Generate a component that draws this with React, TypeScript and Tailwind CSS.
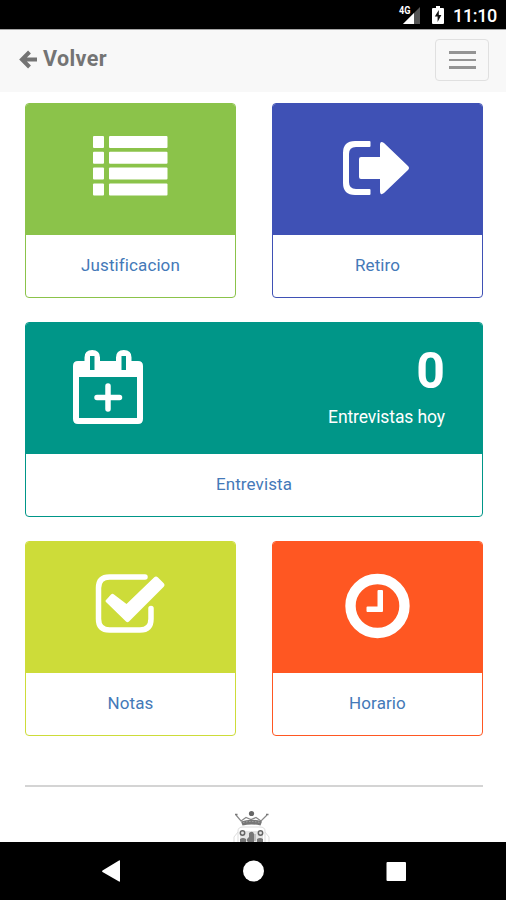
import type { ReactNode } from "react";

type CardProps = {
  label: string;
  frame: string;
  fill: string;
  className?: string;
  children: ReactNode;
};

function Card({ label, frame, fill, className = "", children }: CardProps) {
  return (
    <a className={`flex h-[195px] flex-col overflow-hidden rounded-[4px] border bg-white ${frame} ${className}`}>
      <div className={`h-[131px] shrink-0 ${fill}`}>{children}</div>
      <div className="flex flex-1 items-center justify-center text-[17px] tracking-[0.1px] text-[#4479b8]">{label}</div>
    </a>
  );
}

function ListIcon() {
  return (
    <svg className="ml-[66px] mt-[31px]" width="76" height="62" viewBox="0 0 76 62" fill="#fff">
      <rect x="1" y="1" width="11" height="12" rx="1" />
      <rect x="17" y="1" width="58.5" height="12" rx="1" />
      <rect x="1" y="16.8" width="11" height="12" rx="1" />
      <rect x="17" y="16.8" width="58.5" height="12" rx="1" />
      <rect x="1" y="32.6" width="11" height="12" rx="1" />
      <rect x="17" y="32.6" width="58.5" height="12" rx="1" />
      <rect x="1" y="48.4" width="11" height="12" rx="1" />
      <rect x="17" y="48.4" width="58.5" height="12" rx="1" />
    </svg>
  );
}

function ExitIcon() {
  return (
    <svg className="ml-[69px] mt-[36px]" width="68" height="56" viewBox="0 0 68 56" fill="#fff">
      <path d="M27.5 1H13Q1 1 1 13v30Q1 55 13 55h14.500q1 0 1-1v-4q0-1-1-1H14Q7 49 7 42V14Q7 7 14 7h13.500q1 0 1-1V2q0-1-1-1z" />
      <path d="M19 17h19V5q0-5 4-2l24 23q2 2 0 4L42 53q-4 3-4-2V39H19q-2 0-2-2V19q0-2 2-2z" />
    </svg>
  );
}

function CalendarPlusIcon() {
  return (
    <svg width="72" height="78" viewBox="0 0 72 78" fill="#fff">
      <path
        fillRule="evenodd"
        d="M5 13h6.500V9.500Q11.500 2 19.200 2T27 9.500V13h16V9.500Q43 2 50.800 2T58.500 9.500V13H65q5 0 5 5v53q0 5-5 5H5q-5 0-5-5V18q0-5 5-5zM6 29v41h58V29zM17 8v14h4.500V8zM48.500 8v14H53V8z"
      />
      <path d="M35 38v23M24 49.500h22.500" stroke="#fff" strokeWidth="5.500" strokeLinecap="round" />
    </svg>
  );
}

function CheckIcon() {
  return (
    <svg className="ml-[69px] mt-[31px]" width="73" height="62" viewBox="0 0 73 62" fill="none">
      <path d="M50 4H14.500Q3.500 4 3.500 15v31q0 11 11 11H45q11 0 11-11V35.500" stroke="#fff" strokeWidth="5.500" strokeLinecap="round" />
      <path
        d="M11.500 26.500l4.500-5q1.500-1.500 3 0L31.500 31 59 4.500q2-2 4 0l5.500 5.500q2 2 0 4L34 48.500q-1.500 1.500-3 0L11.500 29.500q-2-1.500 0-3z"
        fill="#fff"
      />
    </svg>
  );
}

function ClockIcon() {
  return (
    <svg className="ml-[71px] mt-[31px]" width="66" height="66" viewBox="0 0 66 66" fill="none">
      <circle cx="33.500" cy="33" r="27" stroke="#fff" strokeWidth="10.400" />
      <path d="M34.500 17h3.500q1 0 1 1v20q0 1-1 1H23.500q-1 0-1-1v-3.500q0-1 1-1h10V18q0-1 1-1z" fill="#fff" />
    </svg>
  );
}

function StatusBar() {
  return (
    <div className="flex h-[30px] items-center justify-end border-b border-[#a5a5a5] bg-black pr-[9px] text-white">
      <svg className="mr-[10px]" width="24" height="22" viewBox="0 0 24 22">
        <path d="M22 3v17H5z" fill="#555" />
        <path d="M16 9v11H5z" fill="#fff" />
        <text x="1" y="9.5" fill="#fff" fontFamily="Roboto, sans-serif" fontSize="10" fontWeight="700" textLength="11.500" lengthAdjust="spacingAndGlyphs">4G</text>
      </svg>
      <svg className="mr-[9px]" width="12" height="20" viewBox="0 0 12 20">
        <path d="M1 3h3V1h4v2h3q1 0 1 1v14q0 1-1 1H1q-1 0-1-1V4q0-1 1-1z" fill="#fff" />
        <path d="M6.800 5L2.800 11.500h2.800V17l3.800-7H6.800z" fill="#111" />
      </svg>
      <span className="relative top-[1px] w-[44px] whitespace-nowrap text-[18px] font-medium leading-5 tracking-[-0.35px]">11:10</span>
    </div>
  );
}

function Crest() {
  return (
    <svg className="ml-[207px] mt-[23px] block" width="40" height="33" viewBox="0 0 40 33" fill="none">
      <path d="M4 5l5 6 5-3.500 5 2 5-2 5 3.500 6-6" stroke="#888" strokeWidth="1.200" />
      <circle cx="19.500" cy="3.500" r="2.600" fill="#666" />
      <path d="M3 4.500h2.500M34 4.500h2.500" stroke="#777" strokeWidth="1.500" />
      <path d="M9 11.500q10.500-3.500 21 0l-1.500 4q-9-2-18 0z" fill="#777" />
      <path d="M11 12.500q8.500-2 17 0" stroke="#aaa" strokeDasharray="1.500 1.500" />
      <path d="M6 33V21q0-4 5-4h17q5 0 5 4v12M2 33v-6l4-5m31 11v-6l-4-5" stroke="#ddd" />
      <path d="M8 21h23v12H8z" fill="#e5e5e5" />
      <circle cx="10.500" cy="23" r="2.200" stroke="#666" strokeWidth="1.500" />
      <circle cx="28.500" cy="23" r="2.200" stroke="#666" strokeWidth="1.500" />
      <path d="M8 29q3-2 6 0v3H8zm17 0q3-2 6 0v3h-6z" fill="#777" />
      <path d="M17 23q4-3 5 1v8h-6q-3-2 1-5z" fill="#777" />
      <path d="M23 24v7" stroke="#999" />
    </svg>
  );
}

export default function App() {
  return (
    <div className="flex h-[900px] w-[506px] flex-col overflow-hidden bg-white font-[Roboto,sans-serif]">
      <StatusBar />
      <header className="flex h-[62px] shrink-0 items-start justify-between bg-[#f8f8f8] pl-[19px] pr-[17px]">
        <a className="mt-[15px] flex items-center text-[21.5px] font-bold leading-7 tracking-[0.4px] text-[#747474]">
          <svg className="mr-[5px]" width="19" height="21" viewBox="0 0 19 21" fill="none">
            <path d="M10.500 3L3 10.500l7.500 7.500M3.500 10.500H18" stroke="#747474" strokeWidth="4" />
          </svg>
          <span>Volver</span>
        </a>
        <button className="mt-[9px] flex h-[42px] w-[54px] flex-col items-center justify-center gap-[5px] rounded-[4px] border border-[#e0e0e0]">
          <span className="h-[2.5px] w-[27px] bg-[#949494]" />
          <span className="h-[2.5px] w-[27px] bg-[#949494]" />
          <span className="h-[2.5px] w-[27px] bg-[#949494]" />
        </button>
      </header>
      <main className="min-h-0 flex-1 overflow-hidden pl-[25px] pr-[23px] pt-[11px]">
        <div className="grid grid-cols-2 gap-x-[36px] gap-y-[24px]">
          <Card label="Justificacion" frame="border-[#8bc34a]" fill="bg-[#8bc34a]">
            <ListIcon />
          </Card>
          <Card label="Retiro" frame="border-[#3f51b5]" fill="bg-[#3f51b5]">
            <ExitIcon />
          </Card>
          <Card label="Entrevista" frame="border-[#009688]" fill="bg-[#009688]" className="col-span-2">
            <div className="flex justify-between pl-[47px] pr-[37px] pt-[25px] text-white">
              <CalendarPlusIcon />
              <div className="flex flex-col items-end">
                <span className="text-[50px] font-bold leading-[46px]">0</span>
                <span className="mt-[11px] text-[17.5px] leading-6 tracking-[-0.1px]">Entrevistas hoy</span>
              </div>
            </div>
          </Card>
          <Card label="Notas" frame="border-[#cddc39]" fill="bg-[#cddc39]">
            <CheckIcon />
          </Card>
          <Card label="Horario" frame="border-[#ff5722]" fill="bg-[#ff5722]">
            <ClockIcon />
          </Card>
        </div>
        <hr className="mt-[49px] border-0 border-t-2 border-[#d4d4d4]" />
        <Crest />
      </main>
      <nav className="h-[58px] shrink-0 bg-black">
        <svg width="506" height="58" viewBox="0 0 506 58" fill="#fff">
          <path d="M119 18.500q1-.5 1 .500v20q0 1-1 .500l-16.500-9.500q-1-1 0-1.500z" />
          <circle cx="253.500" cy="29" r="10.500" />
          <rect x="386.500" y="20" width="19.500" height="19" rx="1" />
        </svg>
      </nav>
    </div>
  );
}
